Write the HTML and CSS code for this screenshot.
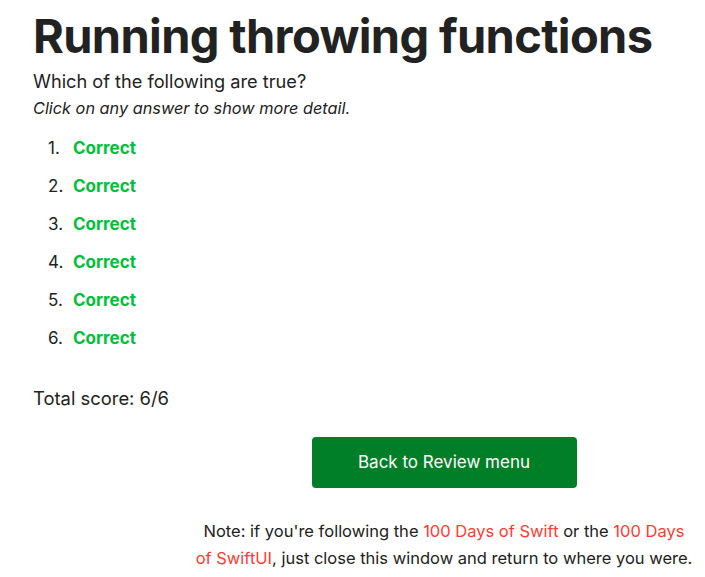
FILE: index.html
```html
<!DOCTYPE html>
<html lang="en">
<head>
<meta charset="utf-8">
<title>Running throwing functions</title>
<link rel="stylesheet" href="styles.css">
</head>
<body>
<main class="page">
  <h1 class="title">Running throwing functions</h1>
  <p class="question">Which of the following are true?</p>
  <p class="hint">Click on any answer to show more detail.</p>
  <ol class="answers">
    <li><span class="correct">Correct</span></li>
    <li><span class="correct">Correct</span></li>
    <li><span class="correct">Correct</span></li>
    <li><span class="correct">Correct</span></li>
    <li><span class="correct">Correct</span></li>
    <li><span class="correct">Correct</span></li>
  </ol>
  <p class="score">Total score: 6/6</p>
  <section class="footer">
    <a class="back-btn" href="#">Back to Review menu</a>
    <p class="note">Note: if you're following the <a href="#">100 Days of Swift</a> or the <a href="#">100 Days of SwiftUI</a>, just close this window and return to where you were.</p>
  </section>
</main>
</body>
</html>
```
FILE: styles.css
```css
html, body {
  margin: 0;
  padding: 0;
  background: #fff;
}
body {
  font-family: Inter, "Noto Sans", sans-serif;
  color: #222;
}
.page {
  padding: 0 12px 0 33px;
}
.title {
  margin: 0;
  padding-top: 8px;
  font-size: 47px;
  font-weight: 700;
  line-height: 56px;
  letter-spacing: -0.65px;
  color: #222;
}
.question {
  margin: 4px 0 0;
  font-size: 18.2px;
  line-height: 26px;
}
.hint {
  margin: 2px 0 0;
  font-size: 16.3px;
  font-style: italic;
  line-height: 24px;
}
.answers {
  margin: 16px 0 0;
  padding-left: 0;
  list-style: none;
  counter-reset: ans;
  font-size: 17px;
}
.answers li {
  counter-increment: ans;
  display: flex;
  line-height: 24px;
  margin-bottom: 14px;
}
.answers li::before {
  content: counter(ans) ".";
  width: 25px;
  margin-left: 15px;
  color: #222;
  font-weight: 400;
}
.correct {
  color: #00c03a;
  font-weight: 700;
}
.score {
  margin: 35px 0 0;
  font-size: 18.4px;
  line-height: 26px;
}
.footer {
  margin: 26px 0 0 161px;
  width: 500px;
  display: flex;
  flex-direction: column;
  align-items: center;
}
.back-btn {
  display: block;
  width: 265px;
  height: 51px;
  line-height: 51px;
  text-align: center;
  background: #007f28;
  color: #fff;
  border-radius: 4px;
  text-decoration: none;
  font-size: 17px;
}
.note {
  margin: 30px 0 0;
  font-size: 16.5px;
  line-height: 27px;
  text-align: center;
}
.note a {
  color: #ff3b30;
  text-decoration: none;
}
```
